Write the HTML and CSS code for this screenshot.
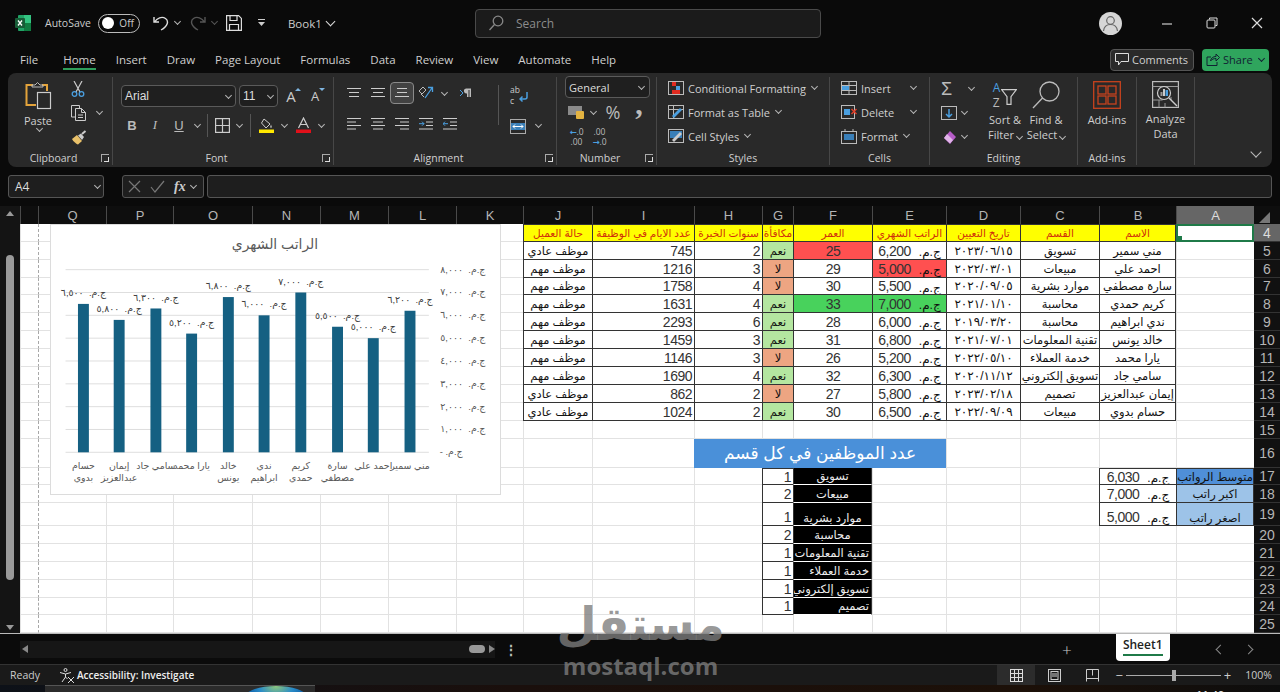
FILE: index.html
```html
<!DOCTYPE html>
<html>
  <head>
    <title>Book1 - Excel</title>
    <meta charset="utf-8">
    <link rel="stylesheet" href="styles.css">
  </head>
  <body>
    <div class="window">
      <div class="title-bar">
        <div class="title-left">
          <svg class="logo" width="16" height="16" viewBox="0 0 16 16">
            <rect x="3" y="0" width="13" height="16" rx="1" fill="#21a366"/>
            <rect x="9" y="0" width="7" height="8" fill="#33c481"/>
            <rect x="9" y="8" width="7" height="8" fill="#107c41"/>
            <rect x="0" y="3" width="10" height="10" rx="1" fill="#185c37"/>
            <path d="M3 5.5l4 5M7 5.5l-4 5" stroke="#fff" stroke-width="1.3"/>
          </svg>
          <span class="autosave">AutoSave</span>
          <span class="toggle"><span class="toggle-dot"></span>Off</span>
          <svg class="undo" width="16" height="16" viewBox="0 0 16 16" fill="none" stroke="#ddd" stroke-width="1.4">
            <path d="M1 2v5h5M1.5 7C4 3 9 1 12.500 3.500S15 11 8 15"/>
          </svg>
          <span class="chev qat-chev"></span>
          <svg class="redo" width="16" height="16" viewBox="0 0 16 16" fill="none" stroke="#555" stroke-width="1.4">
            <path d="M15 2v5h-5M14.500 7C12 3 7 1 3.500 3.500S1 11 8 15"/>
          </svg>
          <span class="chev chev-dim qat-chev"></span>
          <svg class="save" width="16" height="16" viewBox="0 0 16 16" fill="none" stroke="#ddd" stroke-width="1.2">
            <path d="M.6.6h12l2.800 2.800v12H.6zM4 .6v4.900h7V.6M3.500 15.400V9.500h9v5.900"/>
          </svg>
          <svg class="qat-more" width="9" height="8" viewBox="0 0 9 8" fill="#ccc">
            <rect x="1" y="0" width="7" height="1"/>
            <path d="M1 3h7L4.500 7z"/>
          </svg>
          <span class="book-name">Book1</span>
          <span class="chev chev-light"></span>
        </div>
        <div class="search-box">
          <svg width="16" height="16" viewBox="0 0 16 16" fill="none" stroke="#888" stroke-width="1.300">
            <circle cx="10" cy="6" r="4.800"/>
            <path d="M6.500 9.500L1.500 15"/>
          </svg>
          <span>Search</span>
        </div>
        <div class="title-right">
          <svg class="avatar" width="23" height="23" viewBox="0 0 23 23">
            <circle cx="11.500" cy="11.500" r="11.500" fill="#d6d6d6"/>
            <circle cx="11.500" cy="8.500" r="3.800" fill="none" stroke="#666" stroke-width="1.200"/>
            <path d="M4.500 19c.5-4 3-6.500 7-6.500s6.500 2.500 7 6.500" fill="none" stroke="#666" stroke-width="1.200"/>
          </svg>
          <svg class="win-btn" width="12" height="12" viewBox="0 0 12 12"><path d="M1 7h10" stroke="#ccc" stroke-width="1.200"/></svg>
          <svg class="win-btn" width="12" height="12" viewBox="0 0 12 12" fill="none" stroke="#ddd"><path d="M3.500 2.500V1h7.500v7.500H9.500"/><rect x="1" y="3" width="8" height="8" rx="1"/></svg>
          <svg class="win-btn" width="12" height="12" viewBox="0 0 12 12"><path d="M1 1l10 10M11 1L1 11" stroke="#ddd" stroke-width="1.200"/></svg>
        </div>
      </div>

      <div class="tab-bar">
        <span class="tab tab-file">File</span>
        <span class="tab tab-active">Home</span>
        <span class="tab">Insert</span>
        <span class="tab">Draw</span>
        <span class="tab">Page Layout</span>
        <span class="tab">Formulas</span>
        <span class="tab">Data</span>
        <span class="tab">Review</span>
        <span class="tab">View</span>
        <span class="tab">Automate</span>
        <span class="tab">Help</span>
        <button class="comments-btn">
          <svg width="14" height="13" viewBox="0 0 14 13" fill="none" stroke="#ddd"><path d="M.5.500h13v8H6L3.500 12V8.500h-3z"/></svg>
          Comments
        </button>
        <button class="share-btn">
          <svg width="14" height="13" viewBox="0 0 14 13" fill="none" stroke="#123" stroke-width="1"><path d="M5 4H1v8.500h10V9M4.500 8C5 5 7 3.500 10 3.500V1l3.500 3.500L10 8V5.500C8 5.500 6 6 4.500 8z"/></svg>
          Share <span class="chev chev-dark"></span>
        </button>
      </div>

      <div class="ribbon">
        <div class="group group-clipboard">
          <div class="group-body">
            <div class="large paste">
              <svg width="27" height="29" viewBox="0 0 27 29" fill="none">
                <path d="M8 4H1.500v20H11M17 4h5v6" stroke="#e3a33b" stroke-width="2"/>
                <path d="M7 6V4h3l2.500-2.500L15 4h3v2z" stroke="#bbb"/>
                <rect x="12.500" y="11.500" width="13" height="16" stroke="#ccc" stroke-width="1.200"/>
              </svg>
              <span>Paste</span>
              <span class="chev"></span>
            </div>
            <div class="rows">
              <div class="row">
                <svg class="tool" width="14" height="16" viewBox="0 0 14 16" fill="none"><path d="M3 0l6 11M11 0L5 11" stroke="#ccc" stroke-width="1.200"/><circle cx="3.500" cy="13" r="2.300" stroke="#4a9fe0" stroke-width="1.300"/><circle cx="10.500" cy="13" r="2.300" stroke="#4a9fe0" stroke-width="1.300"/></svg>
              </div>
              <div class="row">
                <svg class="tool" width="16" height="16" viewBox="0 0 16 16" fill="none" stroke="#ccc"><path d="M4 12H.5V.5h8V3"/><path d="M4.500 3.500h6l4 4v8h-10zM10.500 3.500v4h4M7 10h5M7 12.500h5"/></svg>
                <span class="chev chev-copy"></span>
              </div>
              <div class="row">
                <svg class="tool" width="16" height="15" viewBox="0 0 16 15"><path d="M1 9l5-4 5 6-4 3.500C5 14 2 11 1 9z" fill="#e8c069"/><path d="M7 5.500l3-2 3 3.500-2 3z" fill="#ccc"/><path d="M11 4l3.500-3" stroke="#ccc" stroke-width="2"/></svg>
              </div>
            </div>
          </div>
          <div class="group-label with-launcher">Clipboard<span class="launcher"></span></div>
        </div>

        <div class="group group-font">
          <div class="group-body column font-body">
            <div class="row">
              <div class="select font-name">Arial<span class="chev"></span></div>
              <div class="select font-size">11<span class="chev"></span></div>
              <span class="w24 grow-a">A<i class="up"></i></span>
              <span class="w24 shrink-a">A<i class="down"></i></span>
            </div>
            <div class="row row-tools">
              <b class="w22 letter">B</b>
              <i class="w24 letter serif-i">I</i>
              <u class="w24 letter">U</u>
              <span class="w12"><span class="chev"></span></span>
              <span class="sep"></span>
              <span class="w20">
                <svg width="15" height="15" viewBox="0 0 15 15" fill="none" stroke="#ccc" stroke-width="1.200"><rect x=".6" y=".6" width="13.800" height="13.800"/><path d="M7.500.6v13.800M.6 7.500h13.800"/></svg>
              </span>
              <span class="w14"><span class="chev"></span></span>
              <span class="sep"></span>
              <span class="w22">
                <svg width="15" height="16" viewBox="0 0 15 16"><path d="M5 2l6 5-4 4-4.500-5z" fill="none" stroke="#ccc"/><path d="M12 7.500l1 3h-2z" fill="#ccc"/><rect x="0" y="12.500" width="15" height="3.500" fill="#ffe800"/></svg>
              </span>
              <span class="w14"><span class="chev"></span></span>
              <span class="w24">
                <svg width="15" height="16" viewBox="0 0 15 16"><path d="M2.500 11L7.500 1l5 10M4.500 7.500h6" fill="none" stroke="#ccc" stroke-width="1.200"/><rect x="0" y="12.500" width="15" height="3.500" fill="#e0101a"/></svg>
              </span>
              <span class="w12"><span class="chev"></span></span>
            </div>
          </div>
          <div class="group-label with-launcher">Font<span class="launcher"></span></div>
        </div>

        <div class="group group-align">
          <div class="group-body">
            <div class="column align-left">
              <div class="row">
                <span class="w24"><svg width="14" height="10" viewBox="0 0 14 10" stroke="#ccc"><path d="M0 .5h14M2 4.500h10M2 8.500h10"/></svg></span>
                <span class="w24"><svg width="14" height="10" viewBox="0 0 14 10" stroke="#ccc"><path d="M0 .5h14M2 4.500h10M0 8.500h14"/></svg></span>
                <span class="w24 selected-tool"><svg width="14" height="10" viewBox="0 0 14 10" stroke="#ccc"><path d="M2 .5h10M2 4.500h10M0 8.500h14"/></svg></span>
                <span class="w24">
                  <svg width="16" height="16" viewBox="0 0 16 16" fill="none"><path d="M1 6l4-4 3 3-4 4zM3 9l3 3" stroke="#bbb"/><path d="M7 13L14 3M10 2.500h4.500V7" stroke="#4a9fe0" stroke-width="1.300"/></svg>
                </span>
                <span class="w12"><span class="chev"></span></span>
                <span class="w24 rtl-tool"><svg width="13" height="10" viewBox="0 0 13 10"><path d="M1 2l3 3-3 3" fill="none" stroke="#4a9fe0"/><path d="M7 .5h5V9h-1.500V2H9.500v7H8V5.500A2.500 2.500 0 0 1 7 .5z" fill="#bbb"/></svg></span>
              </div>
              <div class="row row-tools">
                <span class="w24"><svg width="14" height="12" viewBox="0 0 14 12" stroke="#ccc"><path d="M0 .5h14M0 4h9M0 7.500h14M0 11h9"/></svg></span>
                <span class="w24"><svg width="14" height="12" viewBox="0 0 14 12" stroke="#ccc"><path d="M0 .5h14M2 4h10M0 7.500h14M2 11h10"/></svg></span>
                <span class="w24"><svg width="14" height="12" viewBox="0 0 14 12" stroke="#ccc"><path d="M0 .5h14M5 4h9M0 7.500h14M5 11h9"/></svg></span>
                <span class="w24"><svg width="14" height="12" viewBox="0 0 14 12" fill="none"><path d="M0 .5h14M7 4h7M7 7.500h7M0 11h14" stroke="#ccc"/><path d="M0 5.700h5M3 3.700l2 2-2 2" stroke="#4a9fe0"/></svg></span>
                <span class="w24"><svg width="14" height="12" viewBox="0 0 14 12" fill="none"><path d="M0 .5h14M7 4h7M7 7.500h7M0 11h14" stroke="#ccc"/><path d="M5 5.700H0M2 3.700l-2 2 2 2" stroke="#4a9fe0"/></svg></span>
              </div>
            </div>
            <span class="sep sep-tall"></span>
            <div class="column align-right">
              <div class="row wrap-row">
                <span class="wrap-letters">ab<br>c</span>
                <svg class="wrap-arrow" width="9" height="11" viewBox="0 0 9 11" fill="none"><path d="M8 0v5a2 2 0 0 1-2 2H1M3.500 4.500L1 7l2.500 2.500" stroke="#4a9fe0" stroke-width="1.500"/></svg>
              </div>
              <div class="row merge-row">
                <svg width="16" height="15" viewBox="0 0 16 15" fill="none"><rect x=".5" y=".5" width="15" height="14" stroke="#aaa"/><rect x="1" y="4" width="14" height="7" fill="#3a7fb8"/><path d="M3 7.500h10M5 5.500l-2 2 2 2M11 5.500l2 2-2 2" stroke="#fff"/></svg>
                <span class="chev chev-merge"></span>
              </div>
            </div>
          </div>
          <div class="group-label with-launcher">Alignment<span class="launcher"></span></div>
        </div>

        <div class="group group-number">
          <div class="group-body column number-body">
            <div class="select number-format">General<span class="chev"></span></div>
            <div class="row row-small">
              <span class="w22"><svg width="16" height="15" viewBox="0 0 16 15"><rect x="0" y="1" width="14" height="9" fill="#8a8a8a"/><rect x="8" y="6" width="8" height="8" rx="1" fill="#e3b341"/></svg></span>
              <span class="w12"><span class="chev"></span></span>
              <span class="w28 percent">%</span>
              <span class="w24 comma">,</span>
            </div>
            <div class="row row-small">
              <span class="decimal decimal-more"><span><i>←</i>.0</span><span>.00</span></span>
              <span class="decimal"><span>.00</span><span><i>→</i>.0</span></span>
            </div>
          </div>
          <div class="group-label with-launcher">Number<span class="launcher"></span></div>
        </div>

        <div class="group group-styles">
          <div class="group-body rows rows-text">
            <div class="row">
              <svg width="16" height="14" viewBox="0 0 16 14" fill="none"><rect x=".5" y=".5" width="15" height="13" stroke="#bbb"/><rect x="4" y="1" width="4" height="4" fill="#e02b20"/><rect x="8" y="5" width="4" height="4" fill="#4a9fe0"/><rect x="4" y="9" width="8" height="4" fill="#e02b20"/></svg>
              <span>Conditional Formatting</span><span class="chev"></span>
            </div>
            <div class="row">
              <svg width="16" height="14" viewBox="0 0 16 14" fill="none"><rect x=".5" y=".5" width="15" height="13" stroke="#bbb"/><path d="M.5 4.500h15M5.500.5v13" stroke="#bbb"/><path d="M6 13l8-8-2-2-8 8z" fill="#4a9fe0"/></svg>
              <span>Format as Table</span><span class="chev"></span>
            </div>
            <div class="row">
              <svg width="16" height="14" viewBox="0 0 16 14" fill="none"><rect x=".5" y=".5" width="15" height="13" stroke="#bbb"/><rect x="2" y="2" width="12" height="7" fill="#3a7fb8"/><path d="M6 13l8-8-2-2-8 8z" fill="#ccc"/></svg>
              <span>Cell Styles</span><span class="chev"></span>
            </div>
          </div>
          <div class="group-label">Styles</div>
        </div>

        <div class="group group-cells">
          <div class="group-body rows rows-text">
            <div class="row">
              <svg width="16" height="14" viewBox="0 0 16 14" fill="none"><rect x=".5" y=".5" width="15" height="13" stroke="#bbb"/><path d="M.5 4.500h15M.5 9.500h15M8 .5v13" stroke="#bbb"/><rect x="1" y="5" width="7" height="4" fill="#4a9fe0"/></svg>
              <span class="cell-text">Insert</span><span class="chev"></span>
            </div>
            <div class="row">
              <svg width="16" height="14" viewBox="0 0 16 14" fill="none"><rect x=".5" y=".5" width="13" height="13" stroke="#bbb"/><rect x="3" y="4" width="6" height="6" fill="#4a9fe0"/><path d="M10.500 4l5 5M15.500 4l-5 5" stroke="#e0402a" stroke-width="1.500"/></svg>
              <span class="cell-text">Delete</span><span class="chev"></span>
            </div>
            <div class="row">
              <svg width="16" height="15" viewBox="0 0 16 15" fill="none"><rect x=".5" y="2.500" width="15" height="12" stroke="#bbb"/><rect x="3" y="5" width="10" height="6" fill="#3a7fb8"/><path d="M4 0v2M12 0v2" stroke="#bbb"/></svg>
              <span>Format</span><span class="chev"></span>
            </div>
          </div>
          <div class="group-label">Cells</div>
        </div>

        <div class="group group-editing">
          <div class="group-body">
            <div class="rows edit-tools">
              <div class="row">
                <span class="sigma">Σ</span><span class="chev chev-sigma"></span>
              </div>
              <div class="row">
                <svg width="16" height="14" viewBox="0 0 16 14" fill="none"><rect x=".5" y=".5" width="15" height="13" stroke="#bbb"/><path d="M8 3v8M5 8l3 3 3-3" stroke="#4a9fe0" stroke-width="1.500"/></svg>
                <span class="chev"></span>
              </div>
              <div class="row">
                <svg width="16" height="15" viewBox="0 0 16 15"><path d="M9 1l6 6-6 7-6-6z" fill="#b65cc8"/><path d="M6 4l6 6-3 3.500L3 8z" fill="#e0b4e8"/></svg>
                <span class="chev"></span>
              </div>
            </div>
            <div class="large sort-btn">
              <div class="sort-icon">
                <span class="sort-letters"><span class="sort-a">A</span><span class="sort-z">Z</span></span>
                <svg width="16" height="16" viewBox="0 0 16 16" fill="none"><path d="M.6.6h14.800l-5.400 7v7.800H6V7.600z" stroke="#ccc" stroke-width="1.200"/></svg>
              </div>
              <span>Sort &amp;</span>
              <span>Filter<span class="chev"></span></span>
            </div>
            <div class="large find-btn">
              <svg width="28" height="28" viewBox="0 0 28 28" fill="none" stroke="#bbb" stroke-width="1.300">
                <circle cx="17.500" cy="10.500" r="9.500"/>
                <path d="M10.500 17L1 27"/>
              </svg>
              <span>Find &amp;</span>
              <span>Select<span class="chev"></span></span>
            </div>
          </div>
          <div class="group-label">Editing</div>
        </div>

        <div class="group group-addins">
          <div class="group-body">
            <div class="large addins-btn">
              <svg width="28" height="28" viewBox="0 0 28 28" fill="none" stroke="#c8431e" stroke-width="1.300">
                <rect x=".7" y=".7" width="26.600" height="26.600"/>
                <rect x="5" y="5" width="8" height="8"/>
                <rect x="15" y="5" width="8" height="8"/>
                <rect x="5" y="15" width="8" height="8"/>
                <rect x="15" y="15" width="8" height="8"/>
              </svg>
              <span>Add-ins</span>
            </div>
          </div>
          <div class="group-label">Add-ins</div>
        </div>

        <div class="group group-analyze">
          <div class="group-body">
            <div class="large analyze-btn">
              <svg width="27" height="27" viewBox="0 0 27 27" fill="none">
                <rect x=".6" y=".6" width="25.800" height="25.800" stroke="#bbb" stroke-width="1.200"/>
                <path d="M.6 5.500h25.800M.6 19h10M7 19v7.400M13 22v4.400M19 16v3" stroke="#999"/>
                <circle cx="12" cy="12" r="6.500" stroke="#ccc" stroke-width="1.200"/>
                <rect x="8.500" y="11" width="2" height="4" fill="#999"/>
                <rect x="11" y="8" width="2" height="7" fill="#ccc"/>
                <rect x="13.500" y="9" width="2.500" height="6" fill="#4a9fe0"/>
                <path d="M17 17l8 8" stroke="#ccc" stroke-width="1.500"/>
              </svg>
              <span>Analyze</span>
              <span>Data</span>
            </div>
          </div>
        </div>

        <div class="ribbon-end"><span class="chev chev-big"></span></div>
      </div>

      <div class="formula-bar">
        <div class="name-box">A4<span class="chev"></span></div>
        <div class="formula-btns">
          <svg width="13" height="13" viewBox="0 0 13 13"><path d="M1 1l11 11M12 1L1 12" stroke="#777" stroke-width="1.200"/></svg>
          <svg width="15" height="13" viewBox="0 0 15 13" fill="none"><path d="M1 7l4 5 9-11" stroke="#777" stroke-width="1.200"/></svg>
          <i class="fx">fx</i>
          <span class="chev"></span>
        </div>
        <div class="formula-input"></div>
      </div>

      <div class="sheet-area">
        <div class="v-scroll">
          <span class="arrow-up"></span>
          <span class="v-thumb"></span>
          <span class="arrow-down"></span>
        </div>
        <div class="sheet" id="sheet">
          <svg class="chart" id="chart" width="451" height="271" viewBox="50 224 451 271"></svg>
        </div>
      </div>

      <div class="sheet-tabs">
        <div class="h-scroll">
          <span class="arrow-left"></span>
          <span class="h-thumb"></span>
          <span class="arrow-right"></span>
        </div>
        <span class="dots">⋮</span>
        <span class="add-sheet">+</span>
        <div class="sheet-tab"><span>Sheet1</span></div>
        <span class="tab-nav nav-prev"></span>
        <span class="tab-nav nav-next"></span>
      </div>

      <div class="status-bar">
        <span class="ready">Ready</span>
        <svg width="16" height="15" viewBox="0 0 16 15" fill="none" stroke="#ddd"><circle cx="6.500" cy="2" r="1.500"/><path d="M1 4.500l5.500 1.500L12 4.500M6.500 6v3L3 14M6.500 9l2 2M9 9l6 6M15 9l-6 6"/></svg>
        <b class="access">Accessibility: Investigate</b>
        <div class="view-btns">
          <span class="view-btn view-active">
            <svg width="13" height="13" viewBox="0 0 13 13" fill="none" stroke="#ddd"><rect x=".5" y=".5" width="12" height="12"/><path d="M4.500.5v12M8.500.5v12M.5 4.500h12M.5 8.500h12"/></svg>
          </span>
          <span class="view-btn">
            <svg width="13" height="13" viewBox="0 0 13 13" fill="none" stroke="#ccc"><rect x=".5" y=".5" width="12" height="12"/><rect x="3" y="2.500" width="7" height="8"/><path d="M4 5h5M4 7h5"/></svg>
          </span>
          <span class="view-btn">
            <svg width="13" height="13" viewBox="0 0 13 13" fill="none" stroke="#ccc"><path d="M.5 12.500V.5h12v12M.5 9.500h12M6.500.5v6"/></svg>
          </span>
        </div>
        <div class="zoom-slider">
          <span class="zoom-sign">−</span>
          <span class="zoom-track"><span class="zoom-thumb"></span></span>
          <span class="zoom-sign">+</span>
        </div>
        <span class="zoom-value">100%</span>
      </div>

      <div class="taskbar">
        <div class="task-preview"><span class="globe"></span></div>
        <span class="clock">11:49</span>
      </div>

      <div class="watermark">
        <span class="mark-ar">مستقل</span>
        <span class="mark-en">mostaql.com</span>
      </div>
    </div>

    <script src="script.js"></script>
  </body>
</html>
```

FILE: styles.css
```css
* {
  box-sizing: border-box;
}

body {
  margin: 0;
  background-color: #0a0a0a;
  font-family: "Open Sans", "Noto Sans", sans-serif;
  color: #d4d4d4;
  overflow: hidden;
}

.window {
  position: relative;
  display: flex;
  flex-direction: column;
  height: 692px;
  width: 1280px;
  overflow: hidden;
}

svg {
  flex: none;
  display: block;
}

/* small chevrons used everywhere in the ribbon */
.chev {
  display: inline-block;
  flex: none;
  width: 5px;
  height: 5px;
  margin: -2px 3px 1px 5px;
  border-right: 1.500px solid #b5b5b5;
  border-bottom: 1.500px solid #b5b5b5;
  transform: rotate(45deg);
}

.chev-dim {
  border-color: #555;
}

.chev-light {
  border-color: #ddd;
  width: 7px;
  height: 7px;
}

.chev-dark {
  border-color: #123;
}

.chev-big {
  width: 8px;
  height: 8px;
  border-color: #bbb;
}

/* title bar */
.title-bar {
  display: flex;
  align-items: center;
  height: 46px;
  flex: none;
}

.title-left {
  display: flex;
  align-items: center;
  width: 475px;
  padding-left: 15px;
  font-size: 10.500px;
}

.autosave {
  margin-left: 14px;
  color: #ccc;
}

.toggle {
  display: flex;
  align-items: center;
  justify-content: space-between;
  width: 42px;
  height: 19px;
  margin-left: 7px;
  padding: 0 5px 0 3px;
  border: 1.500px solid #bbb;
  border-radius: 10px;
  font-size: 10px;
  color: #ccc;
}

.toggle-dot {
  width: 12px;
  height: 12px;
  border-radius: 50%;
  background-color: #fff;
}

.undo {
  margin-left: 13px;
}

.qat-chev {
  margin-left: 6px;
  margin-right: 1px;
}

.redo {
  margin-left: 9px;
}

.save {
  margin-left: 8px;
}

.qat-more {
  margin-left: 15px;
}

.book-name {
  margin-left: 22px;
  font-size: 11.500px;
  color: #ccc;
}

.search-box {
  display: flex;
  align-items: center;
  gap: 12px;
  width: 346px;
  height: 29px;
  padding-left: 12px;
  background-color: #1b1b1b;
  border: 1px solid #4a4a4a;
  border-radius: 4px;
  font-size: 12px;
  color: #8c8c8c;
}

.title-right {
  display: flex;
  align-items: center;
  margin-left: auto;
  padding-right: 17px;
}

.win-btn {
  margin-left: 33px;
}

.avatar {
  margin-right: 6px;
}

/* tabs */
.tab-bar {
  display: flex;
  align-items: center;
  gap: 20px;
  height: 27px;
  flex: none;
  padding-left: 20px;
  padding-right: 11px;
  font-size: 11.500px;
}

.tab {
  position: relative;
  color: #cfcfcf;
}

.tab-file {
  margin-right: 5px;
}

.tab-active::after {
  content: "";
  position: absolute;
  left: 0;
  right: 0;
  bottom: -3px;
  height: 2px;
  background-color: #2f9e5b;
}

.comments-btn,
.share-btn {
  display: flex;
  align-items: center;
  gap: 3px;
  height: 22px;
  padding: 0 4px;
  border-radius: 4px;
  font-family: inherit;
  font-size: 11px;
  white-space: nowrap;
}

.comments-btn {
  width: 84px;
  margin-left: auto;
  background-color: #2a2a2a;
  border: 1px solid #555;
  color: #cfcfcf;
}

.share-btn {
  width: 67px;
  margin-left: -12px;
  background-color: #2fa55d;
  border: none;
  color: #123;
}

.share-btn .chev {
  margin: -2px 0 0 3px;
}

/* ribbon */
.ribbon {
  display: flex;
  height: 94px;
  flex: none;
  margin: 0 8px;
  padding: 4px 0 2px;
  background-color: #292929;
  border-radius: 8px;
  font-size: 11px;
}

.group {
  display: flex;
  flex-direction: column;
  flex: none;
  border-right: 1px solid #474747;
}

.group-body {
  display: flex;
  flex: 1;
  min-height: 0;
}

.column {
  display: flex;
  flex-direction: column;
}

.group-label {
  position: relative;
  top: 1px;
  height: 16px;
  line-height: 16px;
  text-align: center;
  font-size: 10.500px;
  color: #cfcfcf;
}

.with-launcher {
  padding-right: 13px;
}

.launcher {
  position: absolute;
  right: 3px;
  top: 4px;
  width: 8px;
  height: 8px;
  border-left: 1px solid #aaa;
  border-top: 1px solid #aaa;
}

.launcher::after {
  content: "";
  position: absolute;
  right: 0;
  bottom: 0;
  width: 4px;
  height: 4px;
  border-right: 1px solid #ddd;
  border-bottom: 1px solid #ddd;
}

.rows {
  display: flex;
  flex-direction: column;
}

.row {
  display: flex;
  align-items: center;
  height: 24px;
  flex: none;
}

.w12,
.w14,
.w20,
.w22,
.w24,
.w28 {
  display: flex;
  align-items: center;
  justify-content: center;
  flex: none;
  height: 22px;
}

.w12 { width: 12px; }
.w14 { width: 14px; }
.w20 { width: 20px; }
.w22 { width: 22px; }
.w24 { width: 24px; }
.w28 { width: 28px; }

.w12 .chev,
.w14 .chev {
  margin: -2px 0 0;
}

.sep {
  flex: none;
  width: 1px;
  height: 23px;
  margin: 0 4px;
  background-color: #555;
}

.sep-tall {
  height: 40px;
  margin: 8px 0 0;
}

.large {
  display: flex;
  flex-direction: column;
  align-items: center;
  flex: none;
  line-height: 15px;
  color: #cfcfcf;
}

.large svg {
  margin-top: 4px;
  margin-bottom: 3px;
}

.group-clipboard {
  width: 105px;
}

.paste {
  width: 36px;
  margin-left: 12px;
}

.paste .chev {
  margin: 5px 0 0;
}

.group-clipboard .rows {
  margin-left: 7px;
}

.group-clipboard .tool {
  margin-left: 8px;
}

.chev-copy {
  margin-left: 10px;
}

.group-font {
  width: 221px;
}

.font-body {
  padding: 8px 0 0 8px;
}

.font-body .row {
  height: 22px;
}

.font-body .row-tools {
  margin-top: 7px;
}

.select {
  display: flex;
  align-items: center;
  justify-content: space-between;
  height: 22px;
  padding-left: 3px;
  background-color: #1f1f1f;
  border: 1px solid #5a5a5a;
  border-radius: 4px;
  font-family: "Liberation Sans", sans-serif;
  font-size: 12px;
  color: #ddd;
}

.font-name {
  width: 115px;
}

.font-size {
  width: 39px;
  margin-left: 3px;
}

.font-size .chev,
.font-name .chev {
  margin: -2px 4px 0 0;
}

.grow-a,
.shrink-a {
  position: relative;
  font-size: 15px;
  color: #ccc;
}

.grow-a {
  margin-left: 1px;
}

.up,
.down {
  position: absolute;
  right: 2px;
  top: 3px;
  border-left: 3px solid transparent;
  border-right: 3px solid transparent;
}

.up {
  border-bottom: 3px solid #7fb5e0;
}

.down {
  border-top: 3px solid #7fb5e0;
}

.shrink-a {
  font-size: 13px;
}

.letter {
  font-family: "Liberation Sans", sans-serif;
  font-size: 13px;
  color: #bbb;
}

.serif-i {
  font-family: "Liberation Serif", serif;
}

.group-align {
  width: 223px;
}

.align-left {
  width: 164px;
  padding: 5px 0 0 8px;
}

.align-left .row {
  height: 22px;
}

.align-left .row-tools {
  margin-top: 9px;
}

.selected-tool {
  background-color: #424242;
  border: 1px solid #8a8a8a;
  border-radius: 4px;
}

.rtl-tool {
  margin-left: 3px;
}

.align-right {
  padding-left: 11px;
}

.wrap-row {
  position: relative;
  margin-top: 6px;
}

.wrap-letters {
  font-size: 8.500px;
  line-height: 11px;
  color: #ccc;
}

.wrap-arrow {
  margin: 4px 0 0 -1px;
}

.merge-row {
  margin-top: 7px;
}

.chev-merge {
  margin-left: 10px;
}

.group-number {
  width: 100px;
}

.number-body {
  padding-left: 8px;
}

.number-format {
  width: 85px;
  flex: none;
  margin-top: -1px;
  margin-bottom: 1px;
  font-family: "Open Sans", sans-serif;
  font-size: 11px;
}

.number-format .chev {
  margin: -2px 5px 0 0;
}

.row-small {
  margin-top: 1px;
}

.percent {
  font-size: 18px;
  color: #bbb;
}

.comma {
  font-family: "Liberation Serif", serif;
  font-size: 30px;
  font-weight: bold;
  color: #bbb;
  padding-bottom: 16px;
}

.decimal {
  display: flex;
  flex-direction: column;
  align-items: center;
  flex: none;
  width: 23px;
  font-size: 8.500px;
  line-height: 10px;
  color: #bbb;
}

.decimal i {
  font-family: "DejaVu Sans", sans-serif;
  font-style: normal;
  font-weight: bold;
  color: #4a9fe0;
}

.rows-text {
  flex-direction: column;
  margin-top: -1px;
  padding-left: 11px;
}

.rows-text .row {
  gap: 4px;
  color: #cfcfcf;
}

.rows-text .row .chev {
  margin-left: 2px;
}

.group-styles {
  width: 173px;
}

.group-cells {
  width: 100px;
}

.cell-text {
  width: 44px;
}

.group-editing {
  width: 148px;
}

.edit-tools {
  width: 53px;
  padding-left: 11px;
}

.sigma {
  width: 16px;
  font-family: "Liberation Sans", sans-serif;
  font-size: 18px;
  line-height: 18px;
  color: #bbb;
}

.chev-sigma {
  margin-left: 12px;
}

.sort-icon {
  display: flex;
  align-items: center;
  height: 32px;
  padding-top: 3px;
  margin-bottom: 3px;
}

.sort-icon svg {
  margin: 5px 0 0 1px;
}

.sort-letters {
  display: flex;
  flex-direction: column;
  font-size: 12px;
  line-height: 15px;
}

.sort-a {
  color: #4a9fe0;
}

.sort-z {
  color: #bbb;
}

.sort-btn {
  width: 38px;
  margin-left: 3px;
}

.find-btn {
  width: 44px;
}

.large .chev {
  margin: -2px 0 0 3px;
}

.group-addins {
  width: 59px;
}

.addins-btn {
  width: 58px;
}

.group-analyze {
  width: 58px;
}

.analyze-btn {
  width: 57px;
}

.ribbon-end {
  display: flex;
  flex: 1;
  align-items: flex-end;
  justify-content: flex-end;
  padding: 0 9px 8px 0;
}

/* formula bar */
.formula-bar {
  display: flex;
  height: 23px;
  flex: none;
  margin: 8px 8px;
}

.name-box {
  display: flex;
  align-items: center;
  justify-content: space-between;
  width: 96px;
  padding-left: 6px;
  background-color: #1e1e1e;
  border: 1px solid #555;
  border-radius: 3px;
  font-size: 12px;
  color: #ddd;
}

.formula-btns {
  display: flex;
  align-items: center;
  gap: 9px;
  width: 82px;
  margin-left: 18px;
  padding-left: 5px;
  background-color: #1e1e1e;
  border: 1px solid #555;
  border-radius: 3px;
}

.formula-btns .chev {
  margin: -2px 0 0 -4px;
}

.fx {
  font-family: "Liberation Serif", serif;
  font-weight: bold;
  font-size: 14px;
  color: #ccc;
}

.formula-input {
  flex: 1;
  margin-left: 3px;
  background-color: #1e1e1e;
  border: 1px solid #555;
  border-radius: 3px;
}

/* sheet */
.sheet-area {
  display: flex;
  height: 427px;
  flex: none;
}

.v-scroll {
  position: relative;
  display: flex;
  flex-direction: column;
  align-items: center;
  width: 20px;
  flex: none;
  background-color: #141414;
}

.arrow-up {
  margin-top: 5px;
  border-left: 4px solid transparent;
  border-right: 4px solid transparent;
  border-bottom: 5px solid #999;
}

.v-thumb {
  width: 8px;
  height: 325px;
  margin-top: 39px;
  background-color: #9a9a9a;
  border-radius: 4px;
}

.arrow-down {
  margin-top: auto;
  margin-bottom: 3px;
  border-left: 4px solid transparent;
  border-right: 4px solid transparent;
  border-top: 5px solid #999;
}

.sheet {
  position: relative;
  display: grid;
  direction: rtl;
  width: 1260px;
  height: 427px;
  background-color: #fff;
  grid-template-columns: 26px 78px 77px 79px 74px 74px 79px 31px 68px 102px 69px 67px 68px 68px 68px 79px 67px 68px 18px;
  grid-template-rows: 18px 18px 18px 18px 17px 18px 18px 18px 18px 18px 18px 18px 18px 29px 17px 18px 23px 18px 18px 18px 18px 17px 18px;
  font-family: "Liberation Sans", "DejaVu Sans", sans-serif;
  color: #111;
}

.cell {
  display: flex;
  align-items: center;
  justify-content: center;
  min-width: 0;
  padding: 0 2px;
  border-left: 1px solid #e2e2e2;
  border-bottom: 1px solid #e2e2e2;
  font-size: 11.500px;
  white-space: nowrap;
  overflow: hidden;
}

.col-head {
  background-color: #0e0e0e;
  border-left: 1px solid #4a4a4a;
  border-bottom: none;
  font-size: 13px;
  font-weight: normal;
  color: #b5b5b5;
}

.col-head.active {
  background-color: #666;
  color: #ddd;
}

.corner {
  background-color: #0e0e0e;
  border: none;
}

.corner::after {
  content: "";
  border-left: 11px solid #777;
  border-top: 11px solid transparent;
  transform: translate(-3px, 2px) scaleX(-1);
}

.row-head {
  background-color: #111;
  border-left: none;
  border-bottom: 1px solid #333;
  font-size: 14px;
  color: #b5b5b5;
}

.row-head.active {
  background-color: #666;
  color: #ddd;
}

.selected {
  border: 2px solid #1f7a48;
  position: relative;
}

.selected::after {
  content: "";
  position: absolute;
  left: -1px;
  bottom: -1px;
  width: 5px;
  height: 5px;
  background-color: #1f7a48;
}

.page-break {
  border-left: 1px dashed #a8a8a8;
}

.box {
  border-left: 1px solid #333;
  border-bottom: 1px solid #333;
}

.box-top {
  border-top: 1px solid #333;
}

.box-right {
  border-right: 1px solid #333;
}

.head {
  background-color: #ffff00;
  font-size: 10.500px;
  color: #d0300a;
}

.num {
  justify-content: flex-start;
  font-size: 14px;
  letter-spacing: -.5px;
  color: #333;
}

.salary {
  gap: 8px;
}

.salary .amount {
  font-size: 14px;
  letter-spacing: -.5px;
  color: #333;
}

.salary .currency {
  font-size: 12px;
  margin-top: 3px;
}

.age {
  font-size: 14px;
  letter-spacing: -.5px;
  color: #333;
}

.date {
  font-size: 12px;
  letter-spacing: .8px;
}

.low {
  background-color: #ff5050;
}

.high {
  background-color: #48d25c;
}

.yes {
  background-color: #b4e6a0;
}

.no {
  background-color: #eda582;
}

.dept-title {
  background-color: #4a90d9;
  border: none;
  font-size: 17px;
  color: #fff;
}

.dept-name {
  background-color: #000;
  border-bottom: 1px solid #fff;
  color: #eee;
}

.dept-right {
  justify-content: flex-start;
}

.bottom {
  align-items: flex-end;
}

.stat-avg {
  background-color: #4f8fd8;
}

.stat-light {
  background-color: #9dc3e8;
}

.chart {
  position: absolute;
  left: 30px;
  top: 18px;
  background-color: #fff;
  border: 1px solid #dcdcdc;
  direction: rtl;
  font-family: "Liberation Sans", "DejaVu Sans", sans-serif;
}

.chart text {
  fill: #595959;
  font-size: 9.500px;
  white-space: pre;
}

.chart .chart-title {
  font-size: 14px;
}

.chart .axis-label {
  font-size: 9.500px;
}

.chart .data-label {
  font-size: 9.500px;
  fill: #404040;
}

.grid-line {
  stroke: #dedede;
  stroke-width: 1;
}

.bar {
  fill: #156082;
}

/* sheet tabs and status */
.sheet-tabs {
  position: relative;
  display: flex;
  align-items: center;
  height: 31px;
  flex: none;
  border-top: 1px solid #bbb;
  background-color: #0b0b0b;
}

.h-scroll {
  display: flex;
  align-items: center;
  width: 475px;
  height: 17px;
  margin-left: 20px;
  padding: 0 0 0 2px;
  background-color: #161616;
}

.arrow-left {
  border-top: 4px solid transparent;
  border-bottom: 4px solid transparent;
  border-right: 6px solid #888;
}

.h-thumb {
  width: 16px;
  height: 8px;
  margin-left: auto;
  background-color: #999;
  border-radius: 4px;
}

.arrow-right {
  margin: 0 0 0 4px;
  border-top: 4px solid transparent;
  border-bottom: 4px solid transparent;
  border-left: 6px solid #888;
}

.dots {
  margin-left: 9px;
  font-size: 14px;
  font-weight: bold;
  color: #bbb;
}

.add-sheet {
  margin-left: 544px;
  font-size: 17px;
  font-weight: 300;
  color: #ccc;
}

.sheet-tab {
  align-self: flex-start;
  width: 54px;
  height: 27px;
  margin-left: 44px;
  background-color: #fff;
  border-radius: 0 0 4px 4px;
  font-size: 12px;
  font-weight: 600;
  color: #222;
  text-align: center;
}

.sheet-tab span {
  display: inline-block;
  height: 22px;
  line-height: 22px;
  border-bottom: 2px solid #1f7a48;
}

.tab-nav {
  width: 7px;
  height: 7px;
  border-left: 1.500px solid #888;
  border-bottom: 1.500px solid #888;
}

.nav-prev {
  margin-left: 47px;
  transform: rotate(45deg);
}

.nav-next {
  margin-left: 21px;
  transform: rotate(225deg);
}

.status-bar {
  display: flex;
  align-items: center;
  height: 21px;
  flex: none;
  padding-left: 10px;
  background-color: #1a1a1a;
  border-top: 1px solid #333;
  font-size: 10.500px;
  color: #ccc;
}

.ready {
  margin-right: 19px;
}

.access {
  margin-left: 2px;
  font-size: 10px;
  font-weight: 600;
  color: #eee;
}

.view-btns {
  display: flex;
  align-items: stretch;
  margin-left: auto;
  height: 100%;
}

.view-btn {
  display: flex;
  align-items: center;
  justify-content: center;
  width: 38px;
}

.view-active {
  background-color: #2c2c2c;
}

.zoom-slider {
  display: flex;
  align-items: center;
  margin-left: 4px;
  gap: 3px;
  font-size: 13px;
}

.zoom-track {
  position: relative;
  width: 95px;
  height: 1px;
  background-color: #aaa;
}

.zoom-thumb {
  position: absolute;
  left: 46px;
  top: -5px;
  width: 4px;
  height: 11px;
  background-color: #aaa;
}

.zoom-value {
  margin-left: 14px;
  margin-right: 8px;
  font-size: 10.500px;
}

.taskbar {
  display: flex;
  flex: 1;
  overflow: hidden;
  background: linear-gradient(90deg, #0d1118 0%, #1a0f0c 40%, #1c1008 80%, #0d0d0d 100%);
}

.task-preview {
  display: flex;
  justify-content: flex-end;
  width: 270px;
  margin-left: 45px;
  padding-right: 9px;
  background-color: #2b2b2b;
  border-top: 1px solid #555;
}

.globe {
  width: 60px;
  height: 20px;
  border-radius: 50%;
  background: radial-gradient(ellipse at center top, #8fc77a 0%, #2a8cc8 40%, #0d5fa8 70%);
}

.clock {
  margin-left: 881px;
  padding-top: 3px;
  font-size: 11px;
  line-height: 14px;
  font-weight: 600;
  color: #ddd;
}

.watermark {
  position: absolute;
  left: 563px;
  top: 596px;
  display: flex;
  flex-direction: column;
  align-items: center;
  width: 155px;
  color: rgba(125, 125, 125, .8);
  pointer-events: none;
}

.mark-ar {
  font-family: "DejaVu Sans", sans-serif;
  font-size: 46px;
  font-weight: bold;
  line-height: 56px;
}

.mark-en {
  font-family: "Open Sans", sans-serif;
  font-size: 24px;
  font-weight: 700;
  line-height: 28px;
}
```

FILE: script.js
```js
const columns = "ABCDEFGHIJKLMNOPQR".split("");

const headers = ["الاسم", "القسم", "تاريخ التعيين", "الراتب الشهري", "العمر", "مكافأة", "سنوات الخبرة", "عدد الايام في الوظيفة", "حالة العميل"];

const employees = [
  ["مني سمير", "تسويق", "٢٠٢٣/٠٦/١٥", "6,200", 25, "نعم", 2, 745, "موظف عادي"],
  ["احمد علي", "مبيعات", "٢٠٢٢/٠٣/٠١", "5,000", 29, "لا", 3, 1216, "موظف مهم"],
  ["سارة مصطفي", "موارد بشرية", "٢٠٢٠/٠٩/٠٥", "5,500", 30, "لا", 4, 1758, "موظف مهم"],
  ["كريم حمدي", "محاسبة", "٢٠٢١/٠١/١٠", "7,000", 33, "نعم", 4, 1631, "موظف مهم"],
  ["ندي ابراهيم", "محاسبة", "٢٠١٩/٠٣/٢٠", "6,000", 28, "نعم", 6, 2293, "موظف مهم"],
  ["خالد يونس", "تقنية المعلومات", "٢٠٢١/٠٧/٠١", "6,800", 31, "نعم", 3, 1459, "موظف مهم"],
  ["يارا محمد", "خدمة العملاء", "٢٠٢٢/٠٥/١٠", "5,200", 26, "لا", 3, 1146, "موظف مهم"],
  ["سامي جاد", "تسويق إلكتروني", "٢٠٢٠/١١/١٢", "6,300", 32, "نعم", 4, 1690, "موظف مهم"],
  ["إيمان عبدالعزيز", "تصميم", "٢٠٢٣/٠٢/١٨", "5,800", 27, "لا", 2, 862, "موظف عادي"],
  ["حسام بدوي", "مبيعات", "٢٠٢٢/٠٩/٠٩", "6,500", 30, "نعم", 2, 1024, "موظف عادي"],
];

const departments = [
  ["تسويق", 1], ["مبيعات", 2], ["موارد بشرية", 1], ["محاسبة", 2],
  ["تقنية المعلومات", 1], ["خدمة العملاء", 1], ["تسويق إلكتروني", 1], ["تصميم", 1],
];

const stats = [
  ["متوسط الرواتب", "6,030", "stat-avg"],
  ["اكبر راتب", "7,000", "stat-light"],
  ["اصغر راتب", "5,000", "stat-light"],
];

const sheet = document.getElementById("sheet");
const chart = document.getElementById("chart");

function salaryHtml(amount) {
  return `<span class="currency">ج.م.</span><span class="amount">${amount}</span>`;
}

// cell contents, keyed by column letter + row number
const content = {};

columns.slice(1, 10).forEach((col, i) => {
  content[col + 4] = { text: headers[i], cls: "box box-top head" + (i === 0 ? " box-right" : "") };
});

employees.forEach((emp, i) => {
  const row = 5 + i;
  const salaryValue = parseInt(emp[3].replace(",", ""), 10);
  const flag = salaryValue === 5000 ? " low" : salaryValue === 7000 ? " high" : "";
  const ageFlag = emp[4] === 25 ? " low" : emp[4] === 33 ? " high" : "";
  content["B" + row] = { text: emp[0], cls: "box box-right" };
  content["C" + row] = { text: emp[1], cls: "box" };
  content["D" + row] = { text: emp[2], cls: "box date" };
  content["E" + row] = { html: salaryHtml(emp[3]), cls: "box salary" + flag };
  content["F" + row] = { text: emp[4], cls: "box age" + ageFlag };
  content["G" + row] = { text: emp[5], cls: "box " + (emp[5] === "نعم" ? "yes" : "no") };
  content["H" + row] = { text: emp[6], cls: "box num" };
  content["I" + row] = { text: emp[7], cls: "box num" };
  content["J" + row] = { text: emp[8], cls: "box" };
});

departments.forEach((dept, i) => {
  const row = 17 + i;
  const low = row === 19 ? " bottom" : "";
  const right = row >= 21 ? " dept-right" : "";
  content["F" + row] = { text: dept[0], cls: "box box-right dept-name" + low + right };
  content["G" + row] = { text: dept[1], cls: "box num" + low + (row === 17 ? " box-top" : "") };
});

stats.forEach((stat, i) => {
  const row = 17 + i;
  const low = row === 19 ? " bottom" : "";
  const top = row === 17 ? " box-top" : "";
  content["A" + row] = { text: stat[0], cls: "box box-right " + stat[2] + low + top };
  content["B" + row] = { html: salaryHtml(stat[1]), cls: "box salary" + low + top };
});

function addCell(cls, text, html) {
  const cell = document.createElement("div");
  cell.className = "cell " + cls;
  if (html) {
    cell.innerHTML = html;
  } else if (text !== undefined) {
    cell.textContent = text;
  }
  sheet.insertBefore(cell, chart);
  return cell;
}

addCell("corner");
columns.forEach((col) => {
  addCell("col-head" + (col === "A" ? " active" : ""), col === "R" ? "" : col);
});

for (let row = 4; row <= 25; row++) {
  addCell("row-head" + (row === 4 ? " active" : ""), row);
  columns.forEach((col) => {
    if (row === 16 && (col === "F" || col === "G" || col === "H")) {
      return;
    }
    if (row === 16 && col === "E") {
      addCell("dept-title", "عدد الموظفين في كل قسم").style.gridColumn = "span 4";
      return;
    }
    if (row === 4 && col === "A") {
      addCell("selected");
      return;
    }
    const item = content[col + row];
    if (item) {
      addCell(item.cls, item.text, item.html);
    } else {
      addCell(col === "Q" ? "page-break" : "");
    }
  });
}

// chart
const SVG_NS = "http://www.w3.org/2000/svg";

function svgEl(name, attrs, text) {
  const el = document.createElementNS(SVG_NS, name);
  Object.keys(attrs).forEach((key) => el.setAttribute(key, attrs[key]));
  if (text) {
    el.textContent = text;
  }
  chart.appendChild(el);
  return el;
}

function toArabicDigits(value) {
  const digits = String(value).replace(/\d/g, (d) => "٠١٢٣٤٥٦٧٨٩"[d]);
  return digits.replace(/(.)(...)$/, "$1,$2");
}

const baseY = 453;
const pxPerThousand = 23;
const gap = "\u00a0\u00a0";

svgEl("text", { x: 275, y: 248, "text-anchor": "middle", class: "chart-title" }, "الراتب الشهري");

for (let k = 0; k <= 8; k++) {
  const y = baseY - k * pxPerThousand;
  svgEl("line", { x1: 64, x2: 430, y1: y, y2: y, class: "grid-line" });
  if (k === 0) {
    svgEl("text", { x: 464, y: y + 3, class: "axis-label" }, "ج.م. -");
  } else {
    svgEl("text", { x: 487, y: y + 3, class: "axis-label" }, "ج.م." + gap + toArabicDigits(k * 1000));
  }
}

const bars = [
  [82, 6500, ["حسام", "بدوي"]],
  [118, 5800, ["إيمان", "عبدالعزيز"]],
  [155, 6300, ["سامي جاد"]],
  [191, 5200, ["يارا محمد"]],
  [228, 6800, ["خالد", "يونس"]],
  [264, 6000, ["ندي", "ابراهيم"]],
  [301, 7000, ["كريم", "حمدي"]],
  [338, 5500, ["سارة", "مصطفي"]],
  [374, 5000, ["احمد علي"]],
  [411, 6200, ["مني سمير"]],
];

bars.forEach(([x, value, lines]) => {
  const top = baseY - (value / 1000) * pxPerThousand;
  svgEl("rect", { x: x - 5.5, y: top, width: 11, height: baseY - top, class: "bar" });
  svgEl("text", { x: x, y: top - 8, "text-anchor": "middle", class: "data-label" }, "ج.م." + gap + toArabicDigits(value));
  lines.forEach((line, i) => {
    svgEl("text", { x: x, y: 470 + i * 12, "text-anchor": "middle" }, line);
  });
});
```
